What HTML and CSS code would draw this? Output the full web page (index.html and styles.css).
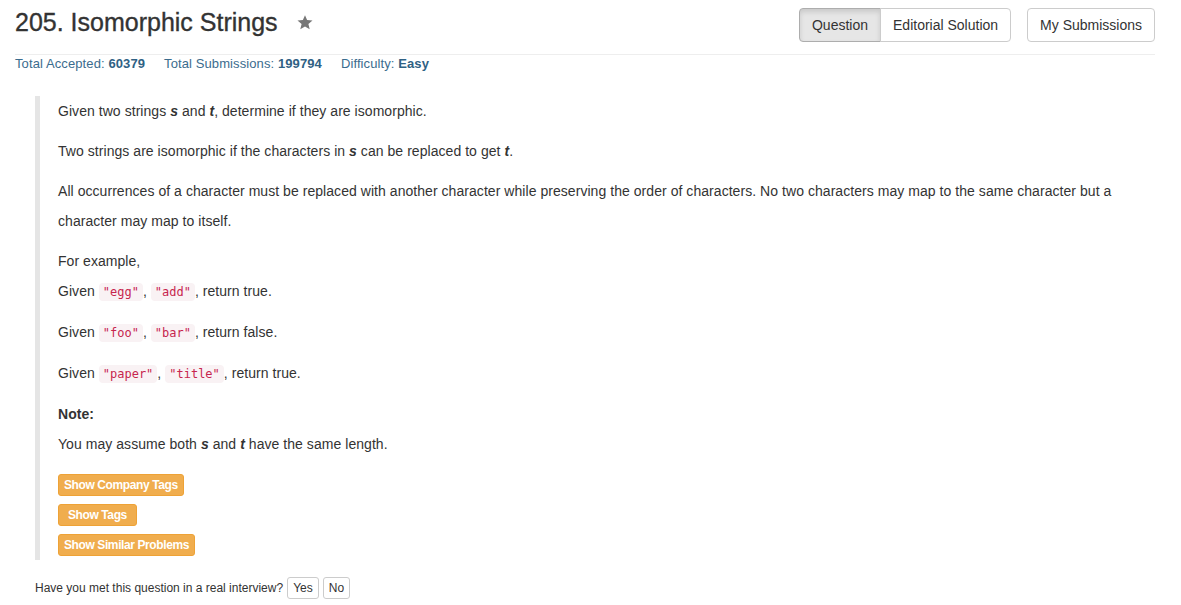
FILE: index.html
```html
<!DOCTYPE html>
<html lang="en">
<head>
<meta charset="utf-8">
<title>205. Isomorphic Strings</title>
<link rel="stylesheet" href="styles.css">
</head>
<body>
<div class="page">
  <div class="header">
    <h3 class="title">205. Isomorphic Strings
      <svg class="star" width="16" height="15" viewBox="0 0 16 15" aria-hidden="true"><path d="M8 0.3 L10.1 5.1 L15.5 5.4 L11.4 8.9 L12.7 14.3 L8 11.4 L3.3 14.3 L4.6 8.9 L0.5 5.4 L5.9 5.1 Z" fill="#777"/></svg>
    </h3>
    <div class="actions">
      <div class="btn-group">
        <a class="btn active">Question</a><a class="btn">Editorial Solution</a>
      </div>
      <a class="btn">My Submissions</a>
    </div>
  </div>
  <hr class="rule">
  <div class="stats">
    <span class="stat">Total Accepted: <b>60379</b></span>
    <span class="stat">Total Submissions: <b>199794</b></span>
    <span class="stat">Difficulty: <b>Easy</b></span>
  </div>
  <blockquote class="question">
    <p>Given two strings <b><i>s</i></b> and <b><i>t</i></b>, determine if they are isomorphic.</p>
    <p>Two strings are isomorphic if the characters in <b><i>s</i></b> can be replaced to get <b><i>t</i></b>.</p>
    <p>All occurrences of a character must be replaced with another character while preserving the order of characters. No two characters may map to the same character but a character may map to itself.</p>
    <p>For example,<br>Given <code>"egg"</code>, <code>"add"</code>, return true.</p>
    <p>Given <code>"foo"</code>, <code>"bar"</code>, return false.</p>
    <p>Given <code>"paper"</code>, <code>"title"</code>, return true.</p>
    <p><b>Note:</b><br>You may assume both <b><i>s</i></b> and <b><i>t</i></b> have the same length.</p>
    <div class="tag-buttons">
      <a class="btn-tag">Show Company Tags</a>
      <a class="btn-tag wide">Show Tags</a>
      <a class="btn-tag">Show Similar Problems</a>
    </div>
  </blockquote>
  <div class="interview">
    <span class="interview-q">Have you met this question in a real interview?</span>
    <a class="btn-xs">Yes</a>
    <a class="btn-xs">No</a>
  </div>
</div>
</body>
</html>
```

FILE: styles.css
```css
html, body {
  margin: 0;
  padding: 0;
  background: #fff;
}

body {
  font-family: "Liberation Sans", Arial, Helvetica, sans-serif;
  font-size: 14px;
  color: #333;
}

.page {
  width: 1140px;
  margin-left: 15px;
  padding-top: 8px;
}

.header {
  display: flex;
  justify-content: space-between;
  align-items: flex-start;
}

.title {
  margin: 0;
  font-size: 25px;
  font-weight: normal;
  line-height: 28px;
  color: #333;
  -webkit-text-stroke: 0.35px #333;
  display: flex;
  align-items: center;
  gap: 19px;
}

.star {
  display: block;
}

.actions {
  display: flex;
  gap: 16px;
}

.btn-group {
  display: flex;
}

.btn {
  display: block;
  box-sizing: border-box;
  height: 34px;
  padding: 6px 12px;
  font-size: 14px;
  line-height: 20px;
  color: #333;
  background: #fff;
  border: 1px solid #ccc;
  border-radius: 4px;
  white-space: nowrap;
}

.btn-group .btn:first-child {
  border-top-right-radius: 0;
  border-bottom-right-radius: 0;
}

.btn-group .btn:last-child {
  border-top-left-radius: 0;
  border-bottom-left-radius: 0;
  margin-left: -1px;
}

.btn.active {
  background: #e6e6e6;
  border-color: #adadad;
  box-shadow: inset 0 3px 5px rgba(0, 0, 0, 0.125);
}

.rule {
  margin: 12px 0 0 0;
  border: 0;
  border-top: 1px solid #eee;
  height: 0;
}

.stats {
  display: flex;
  gap: 19px;
  font-size: 13px;
  line-height: 18px;
  letter-spacing: 0.1px;
  color: #3b6c8e;
}

.stats b {
  color: #2f6184;
}

.question {
  margin: 23px 0 0 20px;
  padding: 0 0 4px 18px;
  border-left: 5px solid #e5e5e5;
  line-height: 30px;
  letter-spacing: 0.05px;
}

.question p {
  margin: 0 0 10px 0;
}

code {
  font-family: "DejaVu Sans Mono", "Liberation Mono", monospace;
  font-size: 12px;
  letter-spacing: 0;
  padding: 2px 4px;
  color: #c7254e;
  background: #f9f2f4;
  border-radius: 4px;
}

.tag-buttons {
  display: flex;
  flex-direction: column;
  align-items: flex-start;
  gap: 8px;
  padding-top: 5px;
}

.btn-tag {
  display: block;
  box-sizing: border-box;
  height: 22px;
  padding: 1px 5px;
  font-size: 12px;
  font-weight: bold;
  line-height: 18px;
  color: #fff;
  background: #f0ad4e;
  border: 1px solid #eea236;
  border-radius: 3px;
  letter-spacing: -0.4px;
}

.btn-tag.wide {
  padding: 1px 9px;
}

.interview {
  display: flex;
  align-items: center;
  gap: 4px;
  margin: 17px 0 0 20px;
  font-size: 12px;
  color: #333;
}

.btn-xs {
  display: block;
  box-sizing: border-box;
  height: 22px;
  padding: 1px 5px;
  font-size: 12px;
  line-height: 18px;
  color: #333;
  background: #fff;
  border: 1px solid #ccc;
  border-radius: 3px;
}
```
